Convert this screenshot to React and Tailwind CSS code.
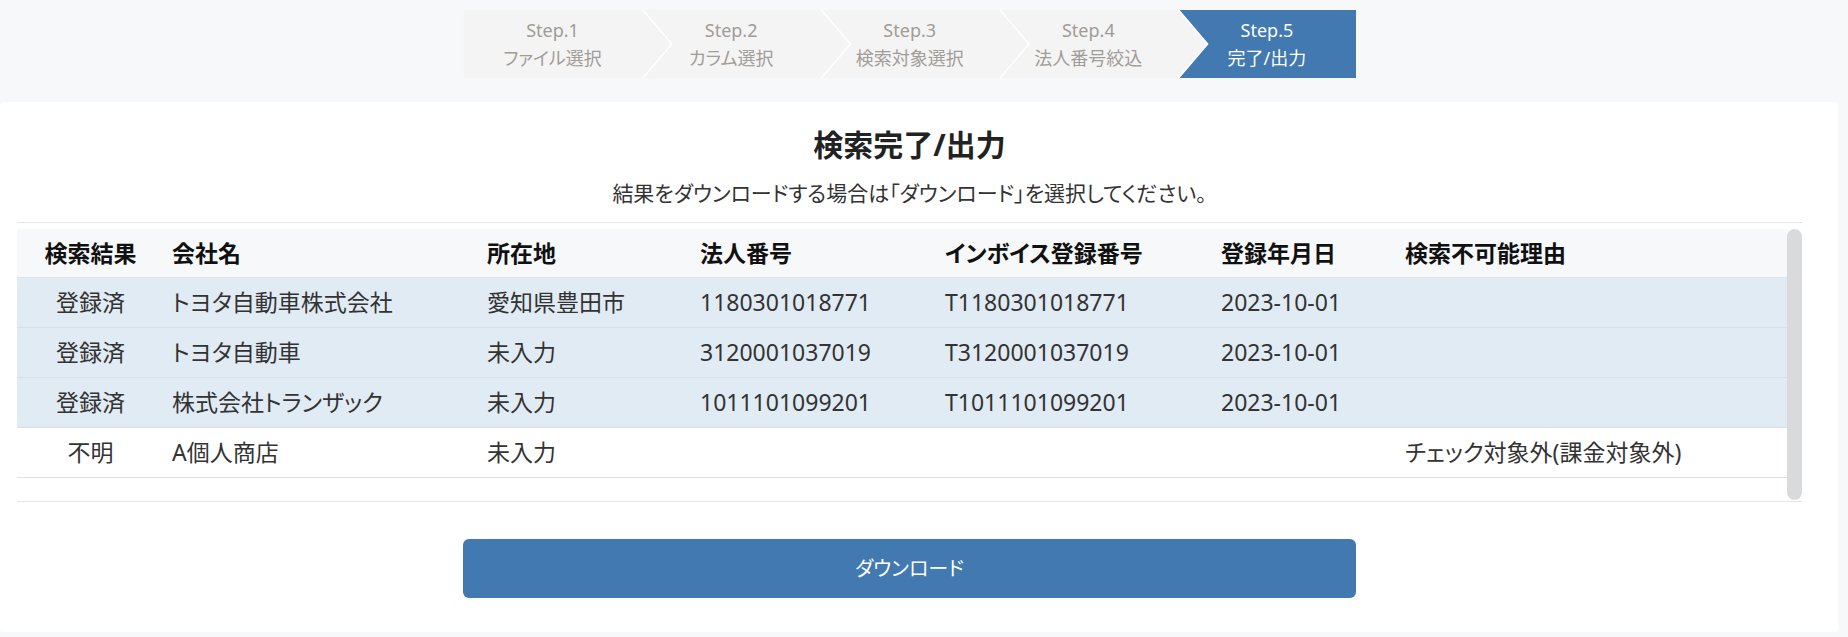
const steps = [
  { no: "Step.1", label: "ファイル選択" },
  { no: "Step.2", label: "カラム選択" },
  { no: "Step.3", label: "検索対象選択" },
  { no: "Step.4", label: "法人番号絞込" },
  { no: "Step.5", label: "完了/出力" },
];

const rows = [
  { status: "登録済", name: "トヨタ自動車株式会社", address: "愛知県豊田市", corp: "1180301018771", invoice: "T1180301018771", date: "2023-10-01", reason: "", found: true },
  { status: "登録済", name: "トヨタ自動車", address: "未入力", corp: "3120001037019", invoice: "T3120001037019", date: "2023-10-01", reason: "", found: true },
  { status: "登録済", name: "株式会社トランザック", address: "未入力", corp: "1011101099201", invoice: "T1011101099201", date: "2023-10-01", reason: "", found: true },
  { status: "不明", name: "A個人商店", address: "未入力", corp: "", invoice: "", date: "", reason: "チェック対象外(課金対象外)", found: false },
];

const headers = ["検索結果", "会社名", "所在地", "法人番号", "インボイス登録番号", "登録年月日", "検索不可能理由"];

function Stepper() {
  return (
    <div className="flex h-[68px] w-1/2 mx-auto bg-white">
      {steps.map((s, i) => {
        const last = i === steps.length - 1;
        let shape;
        if (i === 0) {
          shape = "w-[207.6px] -mr-[29px] pr-[29px] bg-[#f4f4f4] text-[#a09c98] [clip-path:polygon(0_0,calc(100%_-_29px)_0,100%_50%,calc(100%_-_29px)_100%,0_100%)]";
        } else if (last) {
          shape = "w-[178.6px] bg-[#4179b0] text-white [clip-path:polygon(2px_0,100%_0,100%_100%,2px_100%,31px_50%)]";
        } else {
          shape = "w-[207.6px] -mr-[29px] pr-[29px] bg-[#f4f4f4] text-[#a09c98] [clip-path:polygon(2px_0,calc(100%_-_29px)_0,100%_50%,calc(100%_-_29px)_100%,2px_100%,31px_50%)]";
        }
        return (
          <div key={s.no} className={`relative flex flex-col items-center justify-center shrink-0 text-[18px] leading-[28px] ${shape}`}>
            <span>{s.no}</span>
            <span>{s.label}</span>
          </div>
        );
      })}
    </div>
  );
}

function ResultTable() {
  return (
    <div className="border-t border-b border-[#e3e3e8] pt-[6px]">
      <div className="flex h-[272px]">
        <div className="flex-1 overflow-hidden">
          <table className="w-full table-fixed border-collapse text-[23px]">
            <colgroup>
              <col className="w-[147px]" />
              <col className="w-[315px]" />
              <col className="w-[213px]" />
              <col className="w-[245px]" />
              <col className="w-[276px]" />
              <col className="w-[184px]" />
              <col />
            </colgroup>
            <thead>
              <tr className="h-[48px] bg-[#f7f8fa] border-b border-[#dde3e9]">
                {headers.map((h, i) => (
                  <th key={h} className={`font-bold text-[#111] ${i === 0 ? "text-center" : "text-left pl-[8px]"}`}>
                    {h}
                  </th>
                ))}
              </tr>
            </thead>
            <tbody className="text-[#333]">
              {rows.map((r) => (
                <tr key={r.name} className={`h-[50px] border-b ${r.found ? "bg-[#e1ebf4] border-[#d6e0ea]" : "bg-white border-[#e2e2e4]"}`}>
                  <td className="text-center">{r.status}</td>
                  <td className="pl-[8px] whitespace-nowrap">{r.name}</td>
                  <td className="pl-[8px]">{r.address}</td>
                  <td className="pl-[8px]">{r.corp}</td>
                  <td className="pl-[8px]">{r.invoice}</td>
                  <td className="pl-[8px]">{r.date}</td>
                  <td className="pl-[8px] whitespace-nowrap">{r.reason}</td>
                </tr>
              ))}
            </tbody>
          </table>
        </div>
        <div className="w-[15px] h-full">
          <div className="h-[271px] rounded-[8px] bg-[#d9dadb]" />
        </div>
      </div>
    </div>
  );
}

export default function App() {
  return (
    <div className="min-h-[637px] bg-[#f7f8fa] [font-family:'Noto_Sans','Noto_Sans_CJK_JP',sans-serif] [font-feature-settings:'palt']">
      <div className="w-[1838px]">
        <div className="pl-[17px] pr-[36px] pt-[10px] pb-[24px]">
          <Stepper />
        </div>

        <div className="bg-white rounded-[4px] pl-[17px] pr-[36px] pt-[23px] pb-[34px]">
          <h1 className="text-center text-[30px] leading-[40px] font-bold text-[#222]">検索完了/出力</h1>
          <p className="mt-[14px] mb-[15px] text-center text-[21px] leading-[28px] text-[#333]">
            結果をダウンロードする場合は「ダウンロード」を選択してください。
          </p>

          <ResultTable />

          <div className="mt-[37px] w-1/2 mx-auto">
            <button className="w-full h-[59px] rounded-[6px] bg-[#4179b0] text-white text-[20px]">
              ダウンロード
            </button>
          </div>
        </div>
      </div>
    </div>
  );
}
